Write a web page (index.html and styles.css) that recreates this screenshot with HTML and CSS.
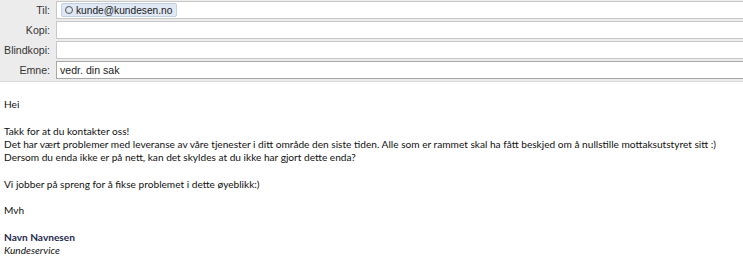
FILE: index.html
```html
<!DOCTYPE html>
<html lang="no">
<head>
<meta charset="utf-8">
<link rel="stylesheet" href="styles.css">
</head>
<body>
<div class="header">
  <div class="row">
    <label class="lbl">Til:</label>
    <div class="field first">
      <span class="token"><span class="dot"></span>kunde@kundesen.no</span>
    </div>
  </div>
  <div class="row">
    <label class="lbl">Kopi:</label>
    <div class="field"></div>
  </div>
  <div class="row">
    <label class="lbl">Blindkopi:</label>
    <div class="field"></div>
  </div>
  <div class="row">
    <label class="lbl">Emne:</label>
    <div class="field focus">vedr. din sak</div>
  </div>
</div>
<div class="body">
  <p>Hei</p>
  <p>Takk for at du kontakter oss!<br>Det har vært problemer med leveranse av våre tjenester i ditt område den siste tiden. Alle som er rammet skal ha fått beskjed om å nullstille mottaksutstyret sitt :)<br>Dersom du enda ikke er på nett, kan det skyldes at du ikke har gjort dette enda?</p>
  <p>Vi jobber på spreng for å fikse problemet i dette øyeblikk:)</p>
  <p>Mvh</p>
  <p><b class="name">Navn Navnesen</b><br><i>Kundeservice</i></p>
</div>
</body>
</html>
```
FILE: styles.css
```css
html, body { margin: 0; padding: 0; background: #fff; }
body { width: 743px; height: 262px; overflow: hidden; }
.header {
  background: #ececec;
  padding: 1px 0 2px 0;
  border-bottom: 1px solid #dcdcdc;
  display: flex;
  flex-direction: column;
  gap: 2px;
  font-family: "Liberation Sans", Arial, sans-serif;
  font-size: 10.6px;
  color: #333;
}
.row { display: flex; align-items: center; height: 18px; }
.lbl { width: 50px; text-align: right; padding-right: 6px; flex: none; }
.field {
  flex: 1;
  height: 16px;
  background: #fff;
  border: 1px solid #c8c8c8;
  border-right: none;
  display: flex;
  align-items: center;
  padding-left: 3px;
  color: #222;
}
.field.first { padding-left: 4px; }
.field.focus { border-color: #a8a8a8; font-size: 10.6px; }
.token {
  display: inline-flex;
  align-items: center;
  gap: 3px;
  height: 12px;
  padding: 0 4px 0 3px;
  background: #dfe8f4;
  border: 1px solid #c2d0e4;
  border-radius: 2px;
  color: #1a1a1a;
  font-size: 10.2px;
}
.dot {
  width: 6px; height: 6px;
  border: 1px solid #555;
  border-radius: 50%;
}
.body {
  padding: 16px 4px 0 4px;
  font-family: Lato, "Open Sans", sans-serif;
  font-size: 10.15px;
  line-height: 13.3px;
  color: #111;
  white-space: nowrap;
}
.body p { margin: 0 0 13.3px 0; }
.name { color: #1f2a4f; }
```
